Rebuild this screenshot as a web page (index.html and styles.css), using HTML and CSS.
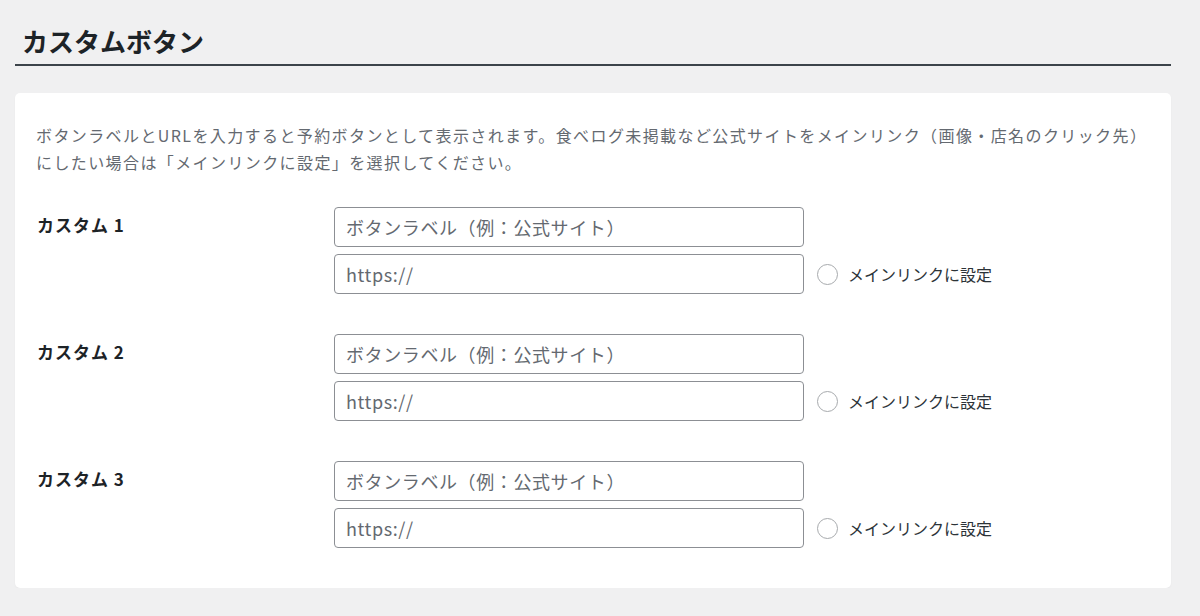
FILE: index.html
```html
<!DOCTYPE html>
<html lang="ja">
<head>
    <meta charset="UTF-8">
    <meta name="viewport" content="width=device-width, initial-scale=1.0">
    <title>カスタムボタン</title>
<link rel="stylesheet" href="styles.css">
</head>
<body>
    <div id="pagina">
        <h2 class="titulo">カスタムボタン</h2>
        <div class="tarjeta">
            <p class="descripcion">ボタンラベルとURLを入力すると予約ボタンとして表示されます。食べログ未掲載など公式サイトをメインリンク（画像・店名のクリック先）<br>にしたい場合は「メインリンクに設定」を選択してください。</p>

            <div class="fila">
                <div class="etiqueta">カスタム 1</div>
                <div class="campos">
                    <input type="text" class="entrada" placeholder="ボタンラベル（例：公式サイト）">
                    <div class="linea">
                        <input type="text" class="entrada" placeholder="https://">
                        <label class="principal"><input type="radio" name="principal"> メインリンクに設定</label>
                    </div>
                </div>
            </div>

            <div class="fila">
                <div class="etiqueta">カスタム 2</div>
                <div class="campos">
                    <input type="text" class="entrada" placeholder="ボタンラベル（例：公式サイト）">
                    <div class="linea">
                        <input type="text" class="entrada" placeholder="https://">
                        <label class="principal"><input type="radio" name="principal"> メインリンクに設定</label>
                    </div>
                </div>
            </div>

            <div class="fila">
                <div class="etiqueta">カスタム 3</div>
                <div class="campos">
                    <input type="text" class="entrada" placeholder="ボタンラベル（例：公式サイト）">
                    <div class="linea">
                        <input type="text" class="entrada" placeholder="https://">
                        <label class="principal"><input type="radio" name="principal"> メインリンクに設定</label>
                    </div>
                </div>
            </div>
        </div>
    </div>
</body>
</html>
```

FILE: styles.css
```css
* {
    box-sizing: border-box;
    font-family: "Noto Sans CJK JP", "Noto Sans", sans-serif;
}
body {
    margin: 0;
    background-color: #f0f0f1;
    color: #1d2327;
}
#pagina {
    padding: 24px 29px 0 15px;
}
.titulo {
    margin: 0;
    padding: 0 0 6px 7px;
    font-size: 26px;
    font-weight: bold;
    line-height: 34px;
    border-bottom: 2px solid #3c434a;
}
.tarjeta {
    margin-top: 27px;
    background-color: white;
    border-radius: 5px;
    padding: 29px 21px 40px 21px;
    box-shadow: 0 1px 2px rgba(0, 0, 0, 0.04);
}
.descripcion {
    margin: 0 0 31px 0;
    font-size: 16px;
    line-height: 27px;
    letter-spacing: 1.4px;
    color: #646970;
}
.fila {
    display: flex;
    margin-bottom: 40px;
}
.fila:last-child {
    margin-bottom: 0;
}
.etiqueta {
    width: 298px;
    padding: 6px 0 0 1px;
    font-size: 17px;
    font-weight: bold;
    line-height: 24px;
    letter-spacing: 1px;
}
.campos {
    display: flex;
    flex-direction: column;
    gap: 7px;
}
.linea {
    display: flex;
    align-items: center;
}
.entrada {
    width: 470px;
    height: 40px;
    margin: 0;
    padding: 0 11px;
    border: 1px solid #8c8f94;
    border-radius: 4px;
    font-size: 18px;
    letter-spacing: 0.6px;
    color: #2c3338;
}
.entrada::placeholder {
    color: #646970;
}
.principal {
    display: flex;
    align-items: center;
    margin-left: 13px;
    font-size: 16px;
    color: #2c3338;
}
.principal input {
    appearance: none;
    width: 21px;
    height: 21px;
    margin: 0 10px 0 0;
    border: 1px solid #a7aaad;
    border-radius: 50%;
    background: white;
}
```
